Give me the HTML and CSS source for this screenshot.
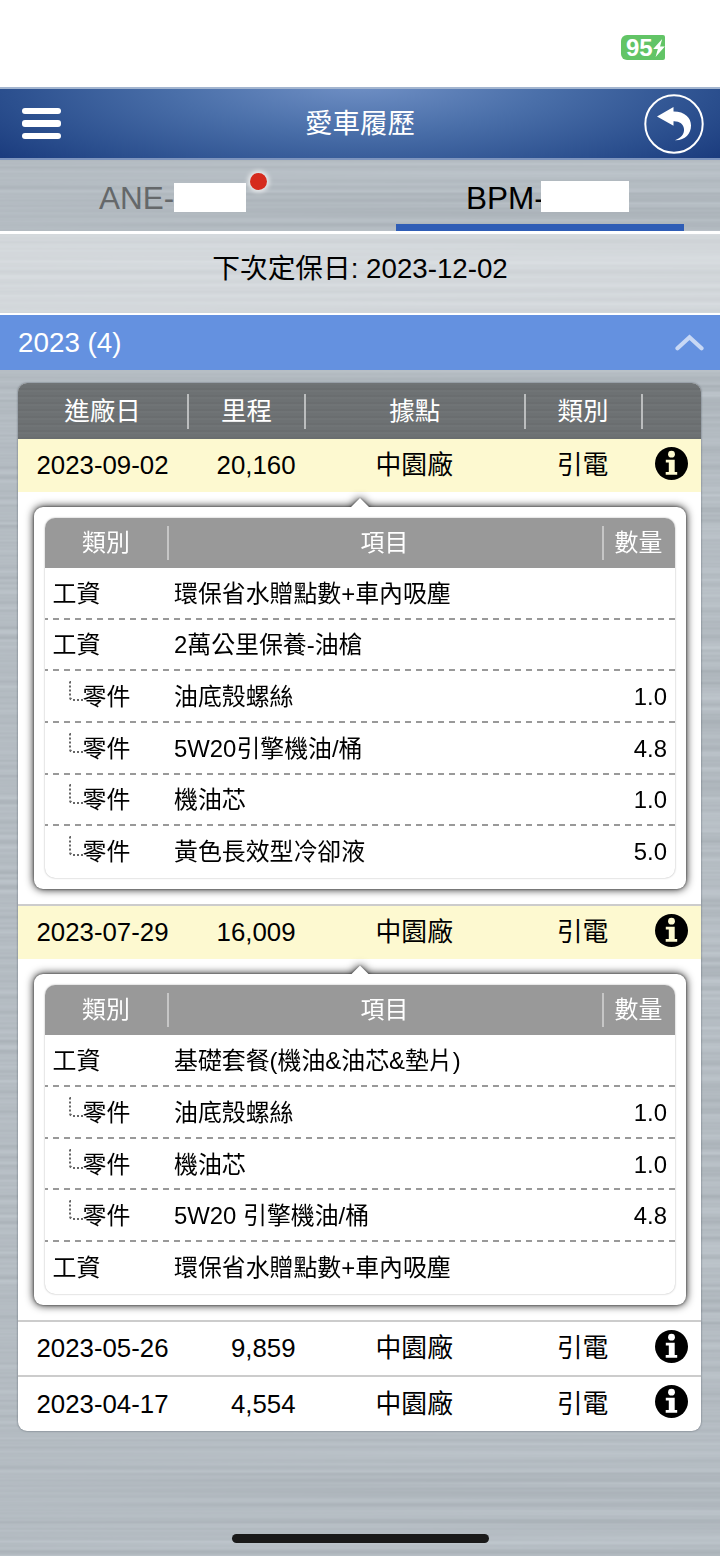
FILE: index.html
```
<!DOCTYPE html>
<html lang="zh-TW">
<head>
  <meta charset="UTF-8" />
  <meta name="viewport" content="width=device-width, initial-scale=1.0" />
  <title>愛車履歷</title>
  <link rel="stylesheet" href="styles.css">
</head>
<body>
  <svg class="sprite" aria-hidden="true">
    <symbol id="icon-info" viewBox="0 0 33 33">
      <circle cx="16.5" cy="16.5" r="16.5" />
      <circle class="cut" cx="16.5" cy="7.200" r="3.400" />
      <path class="cut" d="M10.800 12.700h8.900v12.200h2.500v2.900H10.700v-2.900h3.100v-9.300h-3z" />
    </symbol>
  </svg>

  <div class="status-bar">
    <div class="battery">
      <span>95</span>
      <svg width="12" height="18" viewBox="0 0 11 17"><path d="M8.5 0 0 9.5h4.4L2.3 17 11 7.1H6.5z" fill="#fff" /></svg>
    </div>
  </div>

  <header class="header">
    <div class="menu"><i></i><i></i><i></i></div>
    <h1>愛車履歷</h1>
    <svg class="back" width="60" height="60" viewBox="0 0 60 60">
      <circle cx="30" cy="30" r="28.7" fill="none" stroke="#fff" stroke-width="2" />
      <path d="M13 22.500 29.500 13v4.600C41 17.600 47 24 47 31.500c0 8.500-6 15-16 14.700C37 44 40.500 40 40 35c-.5-5-4.500-8-10.500-7.800v4.600z" fill="#fff" />
    </svg>
  </header>

  <nav class="tabs">
    <div class="tab">
      <span>ANE-</span><span class="mask"></span>
      <b class="dot"></b>
    </div>
    <div class="tab active">
      <span>BPM-</span><span class="mask wide"></span>
    </div>
  </nav>

  <div class="next-date">下次定保日: 2023-12-02</div>

  <div class="year">
    <span>2023 (4)</span>
    <svg width="29" height="17" viewBox="0 0 29 17"><path d="M2.5 14.3 14.5 3.3l12 11" /></svg>
  </div>

  <main class="history">
    <div class="row head">
      <div>進廠日</div><div>里程</div><div>據點</div><div>類別</div><div></div>
    </div>

    <div class="row open first">
      <div>2023-09-02</div><div>20,160</div><div>中園廠</div><div>引電</div>
      <div><svg class="info"><use href="#icon-info" /></svg></div>
    </div>
    <div class="detail">
      <div class="panel">
        <div class="list">
          <div class="item title"><div>類別</div><div>項目</div><div>數量</div></div>
          <div class="item"><div>工資</div><div>環保省水贈點數+車內吸塵</div><div></div></div>
          <div class="item"><div>工資</div><div>2萬公里保養-油槍</div><div></div></div>
          <div class="item part"><div>零件</div><div>油底殼螺絲</div><div>1.0</div></div>
          <div class="item part"><div>零件</div><div>5W20引擎機油/桶</div><div>4.8</div></div>
          <div class="item part"><div>零件</div><div>機油芯</div><div>1.0</div></div>
          <div class="item part"><div>零件</div><div>黃色長效型冷卻液</div><div>5.0</div></div>
        </div>
      </div>
    </div>

    <div class="row open">
      <div>2023-07-29</div><div>16,009</div><div>中園廠</div><div>引電</div>
      <div><svg class="info"><use href="#icon-info" /></svg></div>
    </div>
    <div class="detail">
      <div class="panel">
        <div class="list">
          <div class="item title"><div>類別</div><div>項目</div><div>數量</div></div>
          <div class="item"><div>工資</div><div>基礎套餐(機油&amp;油芯&amp;墊片)</div><div></div></div>
          <div class="item part"><div>零件</div><div>油底殼螺絲</div><div>1.0</div></div>
          <div class="item part"><div>零件</div><div>機油芯</div><div>1.0</div></div>
          <div class="item part"><div>零件</div><div>5W20 引擎機油/桶</div><div>4.8</div></div>
          <div class="item"><div>工資</div><div>環保省水贈點數+車內吸塵</div><div></div></div>
        </div>
      </div>
    </div>

    <div class="row">
      <div>2023-05-26</div><div>9,859</div><div>中園廠</div><div>引電</div>
      <div><svg class="info"><use href="#icon-info" /></svg></div>
    </div>
    <div class="row">
      <div>2023-04-17</div><div>4,554</div><div>中園廠</div><div>引電</div>
      <div><svg class="info"><use href="#icon-info" /></svg></div>
    </div>
  </main>

  <footer class="home"><div class="home-bar"></div></footer>
</body>
</html>
```
FILE: styles.css
```
* {
  box-sizing: border-box;
}
html {
  background: #fff;
}
body {
  display: flex;
  flex-direction: column;
  width: 720px;
  height: 1556px;
  margin: 0;
  font-family: "Liberation Sans", "Noto Sans CJK TC", sans-serif;
  font-size: 25.8px;
  line-height: 30px;
  color: #000;
  /* brushed metal */
  background: #b4bbc2 url("data:image/svg+xml,%3Csvg xmlns='http://www.w3.org/2000/svg' width='720' height='1556'%3E%3Cfilter id='n' x='0' y='0' width='100%25' height='100%25' color-interpolation-filters='sRGB'%3E%3CfeTurbulence type='fractalNoise' baseFrequency='0.0008 0.2' numOctaves='2' seed='4'/%3E%3CfeColorMatrix values='0.12 0 0 0 0.645 0.12 0 0 0 0.675 0.12 0 0 0 0.7 0 0 0 0 1'/%3E%3C/filter%3E%3Crect width='720' height='1556' filter='url(%23n)'/%3E%3C/svg%3E");
}
.sprite {
  display: none;
}

/* status bar */
.status-bar {
  display: flex;
  justify-content: flex-end;
  height: 87px;
  padding: 35px 55px 0 0;
  background: #fff;
}
.battery {
  display: flex;
  align-items: center;
  width: 44px;
  height: 25px;
  padding-left: 5px;
  border-radius: 6px 2px 2px 6px;
  background: #62c466;
  color: #fff;
  font-size: 24px;
  font-weight: bold;
}

/* header */
.header {
  display: flex;
  align-items: center;
  justify-content: space-between;
  height: 73px;
  padding: 0 16px 0 22px;
  border-top: 2px solid #a3b5cf;
  border-bottom: 2px solid #7e95be;
  background: radial-gradient(ellipse 520px 140px at 50% -10%, #7191c6 0%, #4a6fa9 36%, #2b4f8e 69%, #17377a 92%);
  color: #fff;
}
.header h1 {
  margin: 0;
  padding: 1px 0 0 15px;
  font-size: 27.5px;
  font-weight: normal;
}
.menu {
  display: flex;
  flex-direction: column;
  gap: 6px;
  width: 39px;
}
.menu i {
  height: 6.5px;
  border-radius: 3px;
  background: #fff;
}

/* tabs */
.tabs {
  display: flex;
  height: 74px;
  border-bottom: 3px solid #fff;
  font-size: 31.5px;
}
.tab {
  position: relative;
  display: flex;
  width: 50%;
  align-items: center;
  padding: 4px 0 0 99px;
  color: #65686a;
}
.tab.active {
  padding-left: 106px;
  color: #000;
}
.tab.active::after {
  content: "";
  position: absolute;
  left: 36px;
  right: 36px;
  bottom: 0;
  height: 7px;
  background: #2f5db6;
}
.mask {
  width: 72px;
  height: 29px;
  background: #fff;
}
.mask.wide {
  width: 88px;
  height: 31px;
  margin: -3px 0 0 -4px;
  z-index: 1;
}
.dot {
  position: absolute;
  left: 250px;
  top: 13px;
  width: 17px;
  height: 17px;
  border-radius: 50%;
  background: #d52b1e;
  box-shadow: 0 0 5px 2px rgba(255, 255, 255, 0.8);
}

.next-date {
  height: 81px;
  padding-top: 20px;
  border-bottom: 2px solid #fff;
  background: rgba(255, 255, 255, 0.42);
  font-size: 27.7px;
  text-align: center;
}
.year {
  display: flex;
  align-items: center;
  justify-content: space-between;
  height: 55px;
  padding: 0 16px 0 18px;
  background: #6491e0;
  color: #fff;
  font-size: 27.8px;
}
.year path {
  fill: none;
  stroke: #c8d8f5;
  stroke-width: 4.2;
  stroke-linecap: round;
}

/* history table */
.history {
  margin: 13px 19px 0 18px;
  border-radius: 9px;
  background: #fff;
  box-shadow: 0 0 2px rgba(60, 70, 80, 0.8);
  overflow: hidden;
}
.row {
  --cut: #fff;
  display: grid;
  grid-template-columns: 169px 117.5px 219.5px 117px 1fr;
  align-items: center;
  height: 55.5px;
  border-top: 2px solid #ccc;
  text-align: center;
}
.row.head {
  grid-template-columns: 171px 117px 219.5px 117px 1fr;
  height: 56px;
  border-top: 0;
  background: #6d7173 repeating-linear-gradient(rgba(255, 255, 255, 0.02) 0 2px, transparent 2px 5px, rgba(0, 0, 0, 0.03) 5px 7px);
  color: #fff;
  font-size: 25.5px;
}
.row.head div {
  height: 35px;
  padding-top: 2px;
  border-right: 2px solid #bbbdbe;
}
.row.head div:last-child {
  border-right: 0;
}
.row.open {
  --cut: #fdf9d0;
  padding-bottom: 1px;
  background: #fdf9d0;
}
.row.open.first {
  height: 53px;
  border-top: 0;
}
.row:not(.head) div:nth-child(2) {
  padding-right: 9px;
  text-align: right;
}
.info {
  display: block;
  width: 33px;
  height: 33px;
  margin: -4px auto 0;
}
.cut {
  fill: var(--cut);
}

/* expanded record */
.detail {
  padding: 15px 15px 15px 16px;
}
.panel {
  position: relative;
  padding: 11px;
  border-radius: 9px;
  background: #fff;
  filter: drop-shadow(0 0 1px rgba(0, 0, 0, 0.45)) drop-shadow(0 0 4px rgba(0, 0, 0, 0.95));
}
.panel::before {
  content: "";
  position: absolute;
  left: 50%;
  top: -9px;
  width: 20px;
  height: 10px;
  margin-left: -10px;
  background: #fff;
  clip-path: polygon(50% 0, 100% 100%, 0 100%);
}
.list {
  border-radius: 10px;
  box-shadow: 0 0 2px rgba(0, 0, 0, 0.35);
  overflow: hidden;
}
.item {
  display: grid;
  grid-template-columns: 124px 435px 1fr;
  align-items: center;
  height: 51.67px;
  font-size: 23.9px;
  background: repeating-linear-gradient(90deg, #999 0 3px, transparent 3px 8px, #999 8px 11px) 0 100% / 100% 2px no-repeat;
}
.item:last-child {
  background: none;
}
.item div {
  padding-left: 5px;
}
.item div:first-child {
  padding-left: 7.5px;
}
.item div:last-child {
  padding: 0 8px 0 0;
  text-align: right;
}
.item.title {
  height: 50px;
  background: #999;
  color: #fff;
  text-align: center;
}
.item.title div {
  height: 34px;
  padding: 2px 0 0;
  border-right: 2px solid #c6c6c6;
}
.item.title div:nth-child(2) {
  padding-right: 2px;
}
.item.title div:last-child {
  padding-right: 2px;
  border-right: 0;
  text-align: center;
}
.part div:first-child {
  display: flex;
  padding-left: 23.5px;
}
.part div:first-child::before {
  content: "";
  width: 12px;
  height: 18px;
  margin: -1px 0 0 0;
  border-left: 2px dotted #666;
  border-bottom: 2px dotted #666;
  border-bottom-left-radius: 4px;
}

.home {
  display: flex;
  flex: 1;
  align-items: flex-end;
  justify-content: center;
  padding-bottom: 13px;
}
.home-bar {
  width: 257px;
  height: 9px;
  border-radius: 5px;
  background: #1a1a1a;
}
```
